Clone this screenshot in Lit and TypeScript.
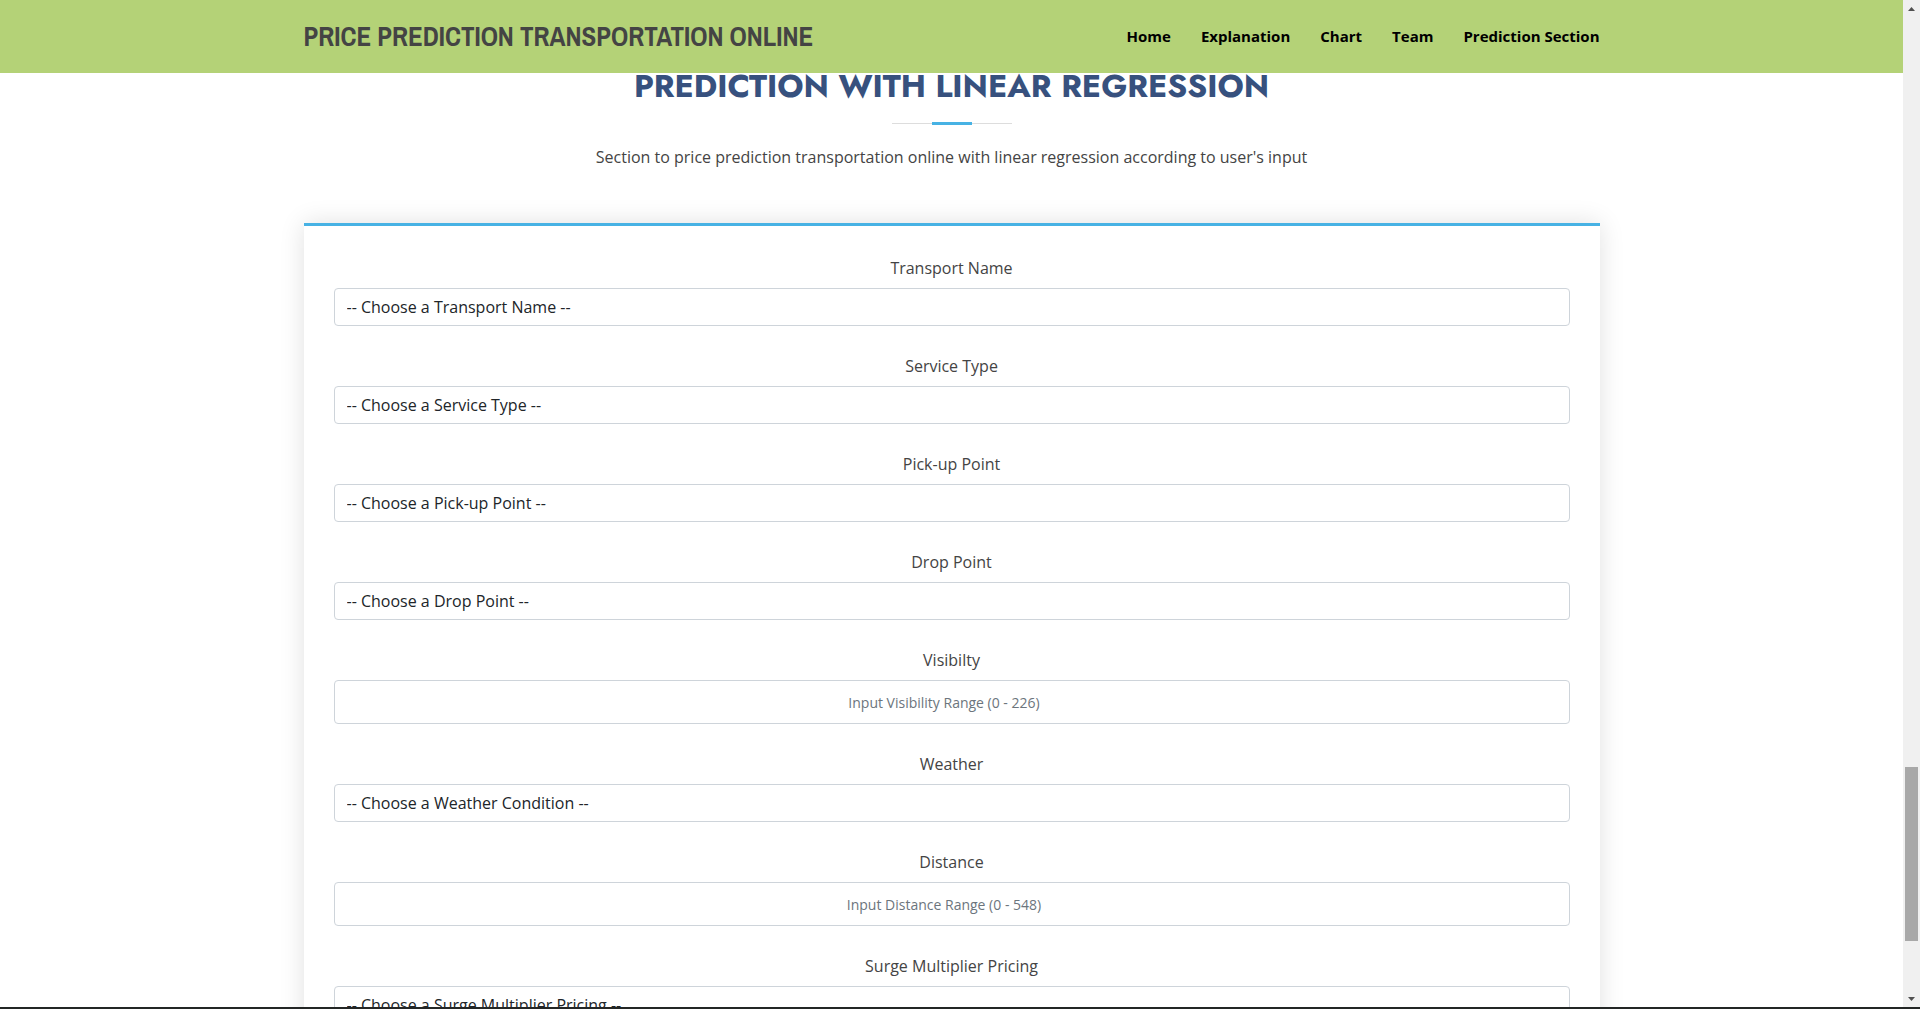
import { LitElement, html, css } from "lit";
import { customElement } from "lit/decorators.js";

interface Field {
  id: string;
  label: string;
  prompt: string;
  kind: "select" | "number";
  max?: number;
}

const NAV = [
  { label: "Home", href: "#hero" },
  { label: "Explanation", href: "#explanation" },
  { label: "Chart", href: "#chart" },
  { label: "Team", href: "#team" },
  { label: "Prediction Section", href: "#prediction" },
];

const FIELDS: Field[] = [
  { id: "transport", label: "Transport Name", prompt: "-- Choose a Transport Name --", kind: "select" },
  { id: "service", label: "Service Type", prompt: "-- Choose a Service Type --", kind: "select" },
  { id: "pickup", label: "Pick-up Point", prompt: "-- Choose a Pick-up Point --", kind: "select" },
  { id: "drop", label: "Drop Point", prompt: "-- Choose a Drop Point --", kind: "select" },
  { id: "visibility", label: "Visibilty", prompt: "Input Visibility Range (0 - 226)", kind: "number", max: 226 },
  { id: "weather", label: "Weather", prompt: "-- Choose a Weather Condition --", kind: "select" },
  { id: "distance", label: "Distance", prompt: "Input Distance Range (0 - 548)", kind: "number", max: 548 },
  { id: "surge", label: "Surge Multiplier Pricing", prompt: "-- Choose a Surge Multiplier Pricing --", kind: "select" },
];

@customElement("site-header")
export class SiteHeader extends LitElement {
  static styles = css`
    :host {
      display: block;
      background: #b4d277;
    }
    .container {
      box-sizing: border-box;
      max-width: 1320px;
      margin: 0 auto;
      padding: 20px 12px;
      display: flex;
      align-items: center;
      justify-content: space-between;
    }
    .logo {
      margin: 0;
      font: 700 27px/33px "Franklin Gothic Medium", "Archivo Narrow", Roboto, sans-serif;
    }
    .logo a {
      color: #444;
      text-decoration: none;
    }
    .links {
      display: flex;
      gap: 30px;
      margin: 0;
      padding: 0;
      list-style: none;
    }
    .link {
      display: block;
      color: #000;
      font-size: 15px;
      font-weight: 700;
      line-height: 23px;
      text-decoration: none;
    }
  `;

  render() {
    return html`
      <header class="container">
        <h1 class="logo"><a href="#hero">PRICE PREDICTION TRANSPORTATION ONLINE</a></h1>
        <nav>
          <ul class="links">
            ${NAV.map((n) => html`<li><a class="link" href=${n.href}>${n.label}</a></li>`)}
          </ul>
        </nav>
      </header>
    `;
  }
}

@customElement("prediction-form")
export class PredictionForm extends LitElement {
  static styles = css`
    :host {
      display: block;
    }
    .form {
      display: flex;
      flex-direction: column;
      gap: 28px;
      padding: 30px;
      border-top: 3px solid #47b2e4;
      background: #fff;
      box-shadow: 0 0 24px rgba(0, 0, 0, 0.12);
    }
    .field {
      display: flex;
      flex-direction: column;
      gap: 8px;
    }
    .label {
      align-self: center;
      line-height: 24px;
    }
    .control {
      box-sizing: border-box;
      width: 100%;
      height: 38px;
      margin: 0;
      padding: 6px 12px;
      border: 1px solid #ced4da;
      border-radius: 4px;
      background: #fff;
      color: #212529;
      font: inherit;
      appearance: none;
    }
    .number {
      height: 44px;
      font-size: 14px;
      text-align: center;
      appearance: auto;
    }
    .number::placeholder {
      color: #6c757d;
      opacity: 1;
    }
  `;

  private control(f: Field) {
    return f.kind === "select"
      ? html`<select class="control" id=${f.id} name=${f.id}>
          <option value="">${f.prompt}</option>
        </select>`
      : html`<input class="control number" type="number" id=${f.id} name=${f.id} min="0" max=${f.max} placeholder=${f.prompt} />`;
  }

  render() {
    return html`
      <form class="form">
        ${FIELDS.map(
          (f) => html`<div class="field">
            <label class="label" for=${f.id}>${f.label}</label>
            ${this.control(f)}
          </div>`
        )}
      </form>
    `;
  }
}

@customElement("scroll-track")
export class ScrollTrack extends LitElement {
  static styles = css`
    :host {
      display: grid;
      grid-template-rows: 17px 1fr 17px;
      background: #f0f0f0;
    }
    .arrow {
      place-self: center;
      display: block;
    }
    .rail {
      display: grid;
      grid-template-rows: 750fr 174fr 49fr;
      padding: 0 2px;
    }
    .thumb {
      grid-row: 2;
      background: #a8a8a8;
    }
  `;

  render() {
    return html`
      <svg class="arrow" width="7" height="4" viewBox="0 0 7 4"><path d="M0 4 3.5 0 7 4z" fill="#505050" /></svg>
      <div class="rail"><div class="thumb"></div></div>
      <svg class="arrow" width="7" height="4" viewBox="0 0 7 4"><path d="M0 0h7L3.5 4z" fill="#505050" /></svg>
    `;
  }
}

@customElement("app-root")
export class AppRoot extends LitElement {
  static styles = css`
    :host {
      display: grid;
      grid-template-columns: minmax(0, 1fr) 17px;
      grid-template-rows: minmax(0, 1fr);
      box-sizing: border-box;
      height: 100vh;
      border-bottom: 2px solid #232625;
      background: #fff;
      color: #444;
      font: 16px/24px "Open Sans", sans-serif;
    }
    .page {
      position: relative;
      overflow: hidden;
    }
    .header {
      position: absolute;
      inset: 0 0 auto;
      z-index: 1;
    }
    .section {
      box-sizing: border-box;
      max-width: 1320px;
      margin: 0 auto;
      padding: 67px 12px 60px;
    }
    .intro {
      display: flex;
      flex-direction: column;
      align-items: center;
      padding-bottom: 54px;
      text-align: center;
    }
    .title {
      margin: 0 0 17px;
      color: #37517e;
      font: 700 32px/38px Jost, Lato, sans-serif;
    }
    .divider {
      display: grid;
      grid-template-columns: 40px 40px 40px;
      align-items: center;
      margin-bottom: 20px;
    }
    .line {
      height: 1px;
      background: #ddd;
    }
    .accent {
      height: 3px;
      background: #47b2e4;
    }
    .text {
      margin: 0;
    }
  `;

  render() {
    return html`
      <div class="page">
        <site-header class="header"></site-header>
        <main class="section" id="prediction">
          <div class="intro">
            <h2 class="title">PREDICTION WITH LINEAR REGRESSION</h2>
            <div class="divider">
              <div class="line"></div>
              <div class="accent"></div>
              <div class="line"></div>
            </div>
            <p class="text">
              Section to price prediction transportation online with linear regression according to user's input
            </p>
          </div>
          <prediction-form></prediction-form>
        </main>
      </div>
      <scroll-track></scroll-track>
    `;
  }
}
